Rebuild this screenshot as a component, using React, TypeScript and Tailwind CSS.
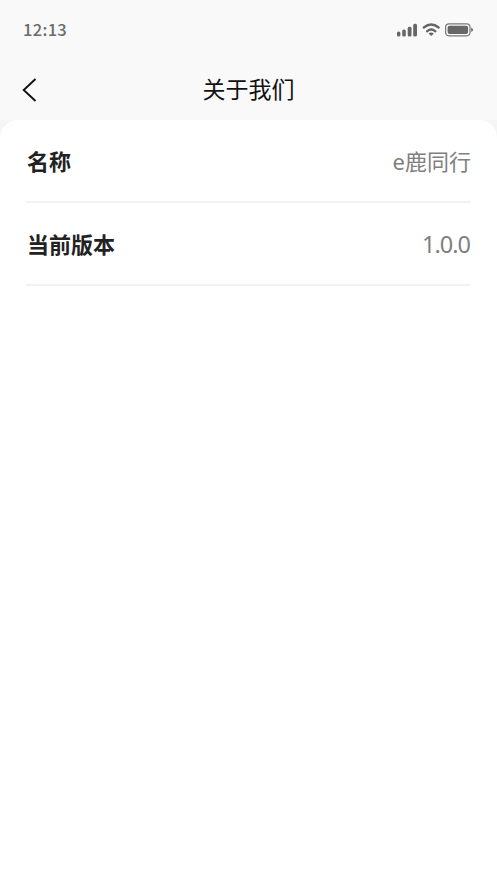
export default function App() {
  return (
    <main className="flex h-[883px] w-[497px] flex-col overflow-hidden bg-[#f5f5f5] font-['Noto_Sans_CJK_SC',sans-serif]">
      <header className="h-[120px] bg-[#f9f9f9]">
        <div className="flex h-[60px] items-center justify-between pl-[23px] pr-[23px]">
          <span className="pb-0.5 text-[16.5px] leading-6 font-medium tracking-[0.3px] text-[#6b6b6b]">12:13</span>
          <svg width="78" height="18" viewBox="396 21 78 18" fill="#666">
            <rect x="397" y="31.5" width="3.4" height="5" rx="1.5" />
            <rect x="402.2" y="29.5" width="3.6" height="7" rx="1.5" />
            <rect x="407.7" y="26.7" width="3.8" height="9.8" rx="1.5" />
            <rect x="413.2" y="23.7" width="3.8" height="12.8" rx="1.5" />
            <g fill="none" stroke="#666" strokeWidth="2.3" strokeLinecap="round">
              <path d="M423.8 27.500Q431.200 21.500 438.600 27.500" />
              <path d="M427 31.300Q431.200 27.800 435.400 31.300" />
            </g>
            <path d="M428.600 33.400Q431.200 31.700 433.800 33.400L431.800 35.500Q431.200 36 430.600 35.500Z" />
            <rect x="445.600" y="23.800" width="24.400" height="12" rx="3.500" fill="none" stroke="#777" strokeWidth="1.2" />
            <rect x="447.600" y="25.700" width="20.500" height="8.300" rx="2" />
            <path d="M471.200 27.500q3.800 2.300 0 4.600z" />
          </svg>
        </div>
        <div className="grid h-[60px] grid-cols-[1fr_auto_1fr] items-center">
          <svg className="ml-[20px]" width="20" height="28" viewBox="20 76 20 28" fill="none" stroke="#111" strokeWidth="1.9">
            <path d="M35.500 79L23.700 90L35.500 101" />
          </svg>
          <h1 className="pb-1 text-[23px] leading-8 text-[#111]">关于我们</h1>
        </div>
      </header>
      <section className="flex-1 rounded-t-[18px] bg-white px-[26px]">
        <div className="flex h-[83px] items-center justify-between border-b-2 border-[#f2f2f2] text-[22px]">
          <b className="pl-px text-[#222]">名称</b>
          <span className="pt-0.5 font-['Noto_Sans','Noto_Sans_CJK_SC',sans-serif] text-[#808080]">e鹿同行</span>
        </div>
        <div className="flex h-[83px] items-center justify-between border-b-2 border-[#f2f2f2] text-[22px]">
          <b className="pl-px text-[#222]">当前版本</b>
          <span className="pt-[3px] pr-px font-['Noto_Sans',sans-serif] text-[23.5px] tracking-[-1px] text-[#808080]">1.0.0</span>
        </div>
      </section>
    </main>
  );
}
